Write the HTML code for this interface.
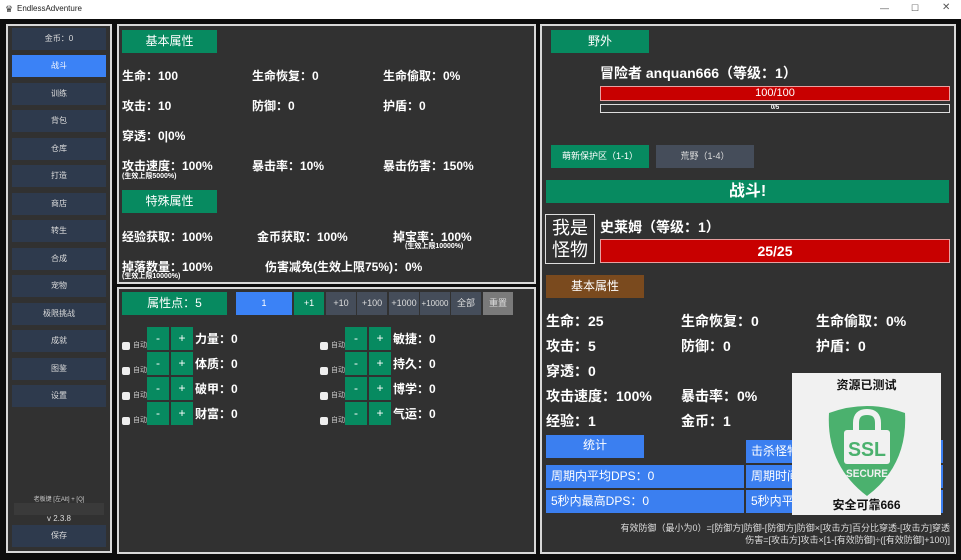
<!DOCTYPE html><html><head><meta charset="utf-8"><style>
*{margin:0;padding:0;box-sizing:border-box}
body{width:961px;height:560px;background:#0d0d0d;font-family:"Liberation Sans","Noto Sans CJK SC",sans-serif;color:#fff;position:relative;overflow:hidden}
.a{position:absolute;white-space:nowrap}
.p{position:absolute;background:#313131;border:2px solid #d8d8d8}
.sb{position:absolute;left:12px;width:94px;height:22px;background:#2e3a4d;font-size:8px;color:#ddd;text-align:center;line-height:22px}
.g{background:#078a60}
.btn{position:absolute;text-align:center;color:#fff}
.t{font-size:12px;line-height:14px;font-weight:bold;position:absolute;white-space:nowrap}
.t2{font-size:14px;line-height:16px;font-weight:bold;position:absolute;white-space:nowrap}
.s{font-size:7px;line-height:8px;font-weight:bold;position:absolute;white-space:nowrap}
.nb{position:absolute;height:23px;line-height:23px;font-size:9px;text-align:center;background:#454d5a;color:#ddd}
.pm{position:absolute;width:22px;height:23px;background:#078a60;text-align:center;line-height:22px;font-size:12px}
.cb{position:absolute;width:8px;height:8px;background:#eee;border-radius:2px}
.zd{position:absolute;font-size:7px;line-height:8px;color:#ccc}
.bl{position:absolute;background:#3b7ff0;color:#fff;font-size:12px;line-height:23px;padding-left:5px;height:23px}
</style></head><body>
<div class="a" style="left:0;top:0;width:961px;height:19px;background:#fff"></div>
<div class="a" style="left:5px;top:4px;width:10px;height:10px;color:#333;font-size:9px">♛</div>
<div class="a" style="left:17px;top:4px;font-size:8px;color:#222">EndlessAdventure</div>
<div class="a" style="left:880px;top:3px;font-size:9px;color:#555">—</div>
<div class="a" style="left:911px;top:3px;font-size:9px;color:#555">☐</div>
<div class="a" style="left:942px;top:2px;font-size:10px;color:#555">✕</div>

<div class="p" style="left:6px;top:24px;width:106px;height:529px"></div>
<div class="sb" style="top:28px">金币：0</div>
<div class="sb" style="top:55px;background:#3b82f6;color:#fff">战斗</div>
<div class="sb" style="top:83px">训练</div>
<div class="sb" style="top:110px">背包</div>
<div class="sb" style="top:138px">仓库</div>
<div class="sb" style="top:165px">打造</div>
<div class="sb" style="top:193px">商店</div>
<div class="sb" style="top:220px">转生</div>
<div class="sb" style="top:248px">合成</div>
<div class="sb" style="top:275px">宠物</div>
<div class="sb" style="top:303px">极限挑战</div>
<div class="sb" style="top:330px">成就</div>
<div class="sb" style="top:358px">图鉴</div>
<div class="sb" style="top:385px">设置</div>
<div class="a" style="left:12px;width:94px;top:494px;font-size:6px;color:#ccc;text-align:center">老板键 [左Alt] + [Q]</div>
<div class="a" style="left:14px;width:90px;top:503px;height:12px;background:#3a3a3a"></div>
<div class="a" style="left:12px;width:94px;top:514px;font-size:8px;color:#ddd;text-align:center">v 2.3.8</div>
<div class="sb" style="top:525px">保存</div>

<div class="p" style="left:117px;top:24px;width:419px;height:260px"></div>
<div class="btn g" style="left:122px;top:30px;width:95px;height:23px;line-height:23px;font-size:12px">基本属性</div>
<div class="t" style="left:122px;top:69px">生命：100</div><div class="t" style="left:252px;top:69px">生命恢复：0</div><div class="t" style="left:383px;top:69px">生命偷取：0%</div>
<div class="t" style="left:122px;top:99px">攻击：10</div><div class="t" style="left:252px;top:99px">防御：0</div><div class="t" style="left:383px;top:99px">护盾：0</div>
<div class="t" style="left:122px;top:129px">穿透：0|0%</div>
<div class="t" style="left:122px;top:159px">攻击速度：100%</div><div class="t" style="left:252px;top:159px">暴击率：10%</div><div class="t" style="left:383px;top:159px">暴击伤害：150%</div>
<div class="s" style="left:122px;top:173px">(生效上限5000%)</div>
<div class="btn g" style="left:122px;top:190px;width:95px;height:23px;line-height:23px;font-size:12px">特殊属性</div>
<div class="t" style="left:122px;top:230px">经验获取：100%</div><div class="t" style="left:257px;top:230px">金币获取：100%</div><div class="t" style="left:393px;top:230px">掉宝率：100%</div>
<div class="s" style="left:405px;top:243px">(生效上限10000%)</div>
<div class="t" style="left:122px;top:260px">掉落数量：100%</div><div class="t" style="left:265px;top:260px">伤害减免(生效上限75%)：0%</div>
<div class="s" style="left:122px;top:273px">(生效上限10000%)</div>

<div class="p" style="left:117px;top:287px;width:419px;height:267px"></div>
<div class="btn g" style="left:122px;top:292px;width:105px;height:23px;line-height:23px;font-size:12px">属性点：5</div>
<div class="nb" style="left:236px;top:292px;width:56px;background:#3b82f6;color:#fff">1</div>
<div class="nb" style="left:294px;top:292px;width:30px;background:#078a60;color:#fff">+1</div>
<div class="nb" style="left:326px;top:292px;width:30px">+10</div>
<div class="nb" style="left:357px;top:292px;width:30px">+100</div>
<div class="nb" style="left:389px;top:292px;width:30px">+1000</div>
<div class="nb" style="left:420px;top:292px;width:30px;font-size:8px">+10000</div>
<div class="nb" style="left:451px;top:292px;width:30px">全部</div>
<div class="nb" style="left:483px;top:292px;width:30px;background:#7a7a7a">重置</div>

<div class="cb" style="left:122px;top:342px"></div><div class="zd" style="left:133px;top:342px">自动</div><div class="pm" style="left:147px;top:327px">-</div><div class="pm" style="left:171px;top:327px">+</div><div class="t" style="left:195px;top:332px">力量：0</div>
<div class="cb" style="left:122px;top:367px"></div><div class="zd" style="left:133px;top:367px">自动</div><div class="pm" style="left:147px;top:352px">-</div><div class="pm" style="left:171px;top:352px">+</div><div class="t" style="left:195px;top:357px">体质：0</div>
<div class="cb" style="left:122px;top:392px"></div><div class="zd" style="left:133px;top:392px">自动</div><div class="pm" style="left:147px;top:377px">-</div><div class="pm" style="left:171px;top:377px">+</div><div class="t" style="left:195px;top:382px">破甲：0</div>
<div class="cb" style="left:122px;top:417px"></div><div class="zd" style="left:133px;top:417px">自动</div><div class="pm" style="left:147px;top:402px">-</div><div class="pm" style="left:171px;top:402px">+</div><div class="t" style="left:195px;top:407px">财富：0</div>
<div class="cb" style="left:320px;top:342px"></div><div class="zd" style="left:331px;top:342px">自动</div><div class="pm" style="left:345px;top:327px">-</div><div class="pm" style="left:369px;top:327px">+</div><div class="t" style="left:393px;top:332px">敏捷：0</div>
<div class="cb" style="left:320px;top:367px"></div><div class="zd" style="left:331px;top:367px">自动</div><div class="pm" style="left:345px;top:352px">-</div><div class="pm" style="left:369px;top:352px">+</div><div class="t" style="left:393px;top:357px">持久：0</div>
<div class="cb" style="left:320px;top:392px"></div><div class="zd" style="left:331px;top:392px">自动</div><div class="pm" style="left:345px;top:377px">-</div><div class="pm" style="left:369px;top:377px">+</div><div class="t" style="left:393px;top:382px">博学：0</div>
<div class="cb" style="left:320px;top:417px"></div><div class="zd" style="left:331px;top:417px">自动</div><div class="pm" style="left:345px;top:402px">-</div><div class="pm" style="left:369px;top:402px">+</div><div class="t" style="left:393px;top:407px">气运：0</div>

<div class="p" style="left:540px;top:24px;width:416px;height:530px"></div>
<div class="btn g" style="left:551px;top:30px;width:98px;height:23px;line-height:23px;font-size:12px">野外</div>
<div class="t2" style="left:600px;top:65px">冒险者 anquan666（等级：1）</div>
<div class="a" style="left:600px;top:86px;width:350px;height:15px;background:#c80000;border:1px solid #e8a0a0;font-size:11px;text-align:center;line-height:13px">100/100</div>
<div class="a" style="left:600px;top:104px;width:350px;height:9px;border:1px solid #ddd;font-size:6px;text-align:center;line-height:7px;font-weight:bold">0/5</div>
<div class="btn g" style="left:551px;top:145px;width:98px;height:23px;line-height:23px;font-size:9px">萌新保护区（1-1）</div>
<div class="btn" style="left:656px;top:145px;width:98px;height:23px;line-height:23px;font-size:9px;background:#454d5a;color:#ddd">荒野（1-4）</div>
<div class="btn g" style="left:546px;top:180px;width:403px;height:23px;line-height:23px;font-size:16px;font-weight:bold">战斗!</div>
<div class="a" style="left:545px;top:214px;width:50px;height:50px;border:1px solid #ddd;font-size:18px;line-height:22px;text-align:center;padding-top:2px;white-space:normal">我是<br>怪物</div>
<div class="t2" style="left:600px;top:219px">史莱姆（等级：1）</div>
<div class="a" style="left:600px;top:239px;width:350px;height:24px;background:#c80000;border:1px solid #e8a0a0;font-size:14px;font-weight:bold;text-align:center;line-height:22px">25/25</div>
<div class="btn" style="left:546px;top:275px;width:98px;height:23px;line-height:23px;font-size:12px;background:#7a4a1e">基本属性</div>
<div class="t2" style="left:546px;top:313px">生命：25</div><div class="t2" style="left:681px;top:313px">生命恢复：0</div><div class="t2" style="left:816px;top:313px">生命偷取：0%</div>
<div class="t2" style="left:546px;top:338px">攻击：5</div><div class="t2" style="left:681px;top:338px">防御：0</div><div class="t2" style="left:816px;top:338px">护盾：0</div>
<div class="t2" style="left:546px;top:363px">穿透：0</div>
<div class="t2" style="left:546px;top:388px">攻击速度：100%</div><div class="t2" style="left:681px;top:388px">暴击率：0%</div>
<div class="t2" style="left:546px;top:413px">经验：1</div><div class="t2" style="left:681px;top:413px">金币：1</div>
<div class="btn" style="left:546px;top:435px;width:98px;height:23px;line-height:21px;font-size:12px;background:#3b7ff0">统计</div>
<div class="bl" style="left:746px;top:440px;width:197px">击杀怪物</div>
<div class="bl" style="left:546px;top:465px;width:198px">周期内平均DPS：0</div>
<div class="bl" style="left:746px;top:465px;width:197px">周期时间</div>
<div class="bl" style="left:546px;top:490px;width:198px">5秒内最高DPS：0</div>
<div class="bl" style="left:746px;top:490px;width:197px">5秒内平</div>
<div class="a" style="right:11px;top:521px;font-size:9px;color:#ddd;text-align:right">有效防御（最小为0）=[防御方]防御-[防御方]防御×[攻击方]百分比穿透-[攻击方]穿透</div>
<div class="a" style="right:11px;top:533px;font-size:9px;color:#ddd;text-align:right">伤害=[攻击方]攻击×[1-[有效防御]÷([有效防御]+100)]</div>

<div class="a" style="left:792px;top:373px;width:149px;height:142px;background:#f1f1f1"></div>
<div class="a" style="left:792px;top:377px;width:149px;text-align:center;font-size:12px;line-height:16px;font-weight:bold;color:#111">资源已测试</div>
<svg class="a" style="left:826px;top:401px" width="82" height="96" viewBox="0 0 82 96">
<path d="M3 12 Q41 -2 79 12 Q82 64 41 95 Q0 64 3 12Z" fill="#4bb16e"/>
<path d="M30 30 V22 Q30 11 41 11 Q52 11 52 22 V30" fill="none" stroke="#f1f1f1" stroke-width="6"/>
<rect x="18" y="29" width="46" height="34" rx="3" fill="#f1f1f1"/>
<text x="41" y="55" text-anchor="middle" font-family="Liberation Sans" font-weight="bold" font-size="20" textLength="38" lengthAdjust="spacingAndGlyphs" fill="#4bb16e">SSL</text>
<text x="41" y="76" text-anchor="middle" font-family="Liberation Sans" font-weight="bold" font-size="11" textLength="42" lengthAdjust="spacingAndGlyphs" fill="#f1f1f1">SECURE</text>
</svg>
<div class="a" style="left:792px;top:497px;width:149px;text-align:center;font-size:12px;line-height:16px;font-weight:bold;color:#111">安全可靠666</div>
</body></html>
